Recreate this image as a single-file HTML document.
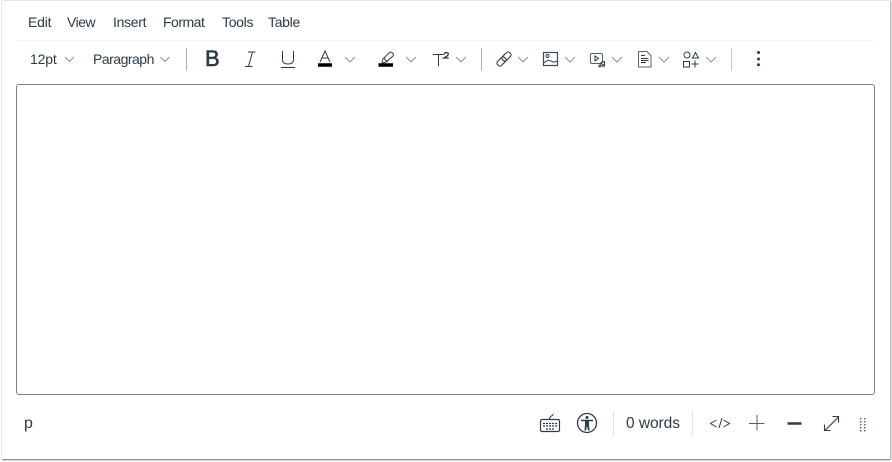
<!DOCTYPE html>
<html><head><meta charset="utf-8"><style>
html,body{margin:0;padding:0;background:#fff}
#p{position:relative;width:892px;height:462px;overflow:hidden;background:#fff;font-family:"Liberation Sans",sans-serif;color:#2d3b45}
.t{position:absolute;font-size:14px;line-height:18px;white-space:nowrap;color:#2d3b45}
svg{position:absolute;left:0;top:0}
</style></head><body><div id="p">
<div style="position:absolute;left:1px;top:0;width:890px;height:460px;box-sizing:border-box;border:1px solid #e6e6e6;border-right:1px solid #b8b8b8;border-bottom:1px solid #8f8f8f;border-radius:2px;box-shadow:1px 1px 1px #d4d4d4"></div>
<div style="position:absolute;left:16px;top:40px;width:860px;height:1px;background:#f3f3f3"></div>
<div style="position:absolute;left:16px;top:84px;width:859px;height:311px;box-sizing:border-box;border:1px solid #7f7f7f;border-radius:3px"></div>
<span class="t" style="left:28px;top:13px;letter-spacing:-.2px">Edit</span>
<span class="t" style="left:67px;top:13px;letter-spacing:-.5px">View</span>
<span class="t" style="left:113px;top:13px;letter-spacing:-.3px">Insert</span>
<span class="t" style="left:163px;top:13px;letter-spacing:-.5px">Format</span>
<span class="t" style="left:222px;top:13px;letter-spacing:-.3px">Tools</span>
<span class="t" style="left:268px;top:13px;letter-spacing:-.3px">Table</span>
<span class="t" style="left:30px;top:50px;letter-spacing:-.15px">12pt</span>
<span class="t" style="left:93px;top:50px;letter-spacing:-.5px">Paragraph</span>
<span class="t" style="left:626px;top:415px;font-size:15.5px;letter-spacing:-.05px">0 words</span>
<span class="t" style="left:24px;top:415px;font-size:16px">p</span>
<span class="t" style="left:205px;top:47px;font-size:22px;line-height:24px;font-weight:400;-webkit-text-stroke:.6px #2d3b45">B</span>
<svg width="892" height="462" fill="none" stroke="#2d3b45" stroke-width="1">
<!-- chevrons -->
<g stroke="#8a949c">
<path d="M65 57l4.500 4.500 4.500-4.500M160.500 57l4.500 4.500 4.500-4.500M345 57l5 5 5-5M406 57l5 5 5-5M456 57l5 5 5-5M518 57l5 5 5-5M565 57l5 5 5-5M612 57l5 5 5-5M659 57l5 5 5-5M706 57l5 5 5-5"/>
</g>
<!-- separators -->
<path d="M186.500 48v23M481.500 48v23" stroke="#a9b2b9"/>
<path d="M731.500 48v23" stroke="#c0c5ca"/>
<path d="M613.500 411v24M692.500 411v24" stroke="#e0e3e5"/>
<!-- I -->
<path d="M248 52h7.500M245 66.500h7.500M252.500 52l-4 14.500"/>
<!-- U -->
<path d="M282.500 51v8.500q0 4.500 5.500 4.500t5.500-4.500v-8.500M281 67.500h14"/>
<!-- A -->
<path d="M320 62l5-11 5 11M321.500 58h7"/>
<path d="M318 65h14" stroke="#000" stroke-width="3.500"/>
<!-- highlighter -->
<path d="M382 62l1-3 6.500-6.500q1.500-1 3 .5t.5 3l-7 6-3 1zM384 58.500l3.500 3.500"/>
<path d="M378.500 65h14.500" stroke="#000" stroke-width="3.500"/>
<!-- T2 -->
<path d="M433 54.500h10.500M438.500 54.500v12"/>
<path d="M444 54.500q.5-2 2.200-2t2.200 1.300q0 1.200-2 2.800l-2.300 1.400h4.600" stroke-width="1.300"/>
<!-- link -->
<g transform="rotate(-45 504 59)" stroke-width="1.100">
<rect x="495.500" y="56.250" width="10" height="5.500" rx="2.200"/>
<rect x="502.500" y="56.250" width="10" height="5.500" rx="2.200"/>
</g>
<!-- image -->
<rect x="543.500" y="52.500" width="14" height="13" stroke="#3d4b55" stroke-width="1.200"/>
<circle cx="547.500" cy="56" r="1.500"/>
<path d="M544 63q4-4 7-2t6 0"/>
<!-- media -->
<rect x="590.500" y="53.500" width="12" height="10" rx="1.500" stroke="#55626c"/>
<path d="M595 56v5l3.500-2.500z"/>
<path d="M601 66v-3.500l3.500-1v4" stroke-width="1"/>
<circle cx="599.800" cy="66" r="1"/><circle cx="603.500" cy="65.500" r="1"/>
<!-- doc -->
<path d="M638.500 51.500h8.500l4 4v11.500h-12.500z" stroke="#55626c"/>
<path d="M641 55.500h4M641 58.500h7.500M641 60.500h7.500M641 62.500h5" stroke-width=".9"/>
<!-- apps -->
<circle cx="687" cy="55" r="3"/>
<path d="M692.500 58h6l-3-5.500z"/>
<rect x="683.500" y="61.500" width="6" height="5.500"/>
<path d="M691.500 64h7M695 60.500v7"/>
<!-- dots -->
<g fill="#2d3b45" stroke="none"><circle cx="758.500" cy="52.500" r="1.500"/><circle cx="758.500" cy="59" r="1.500"/><circle cx="758.500" cy="64.800" r="1.500"/></g>
<!-- keyboard -->
<rect x="540.500" y="419.500" width="19" height="12" rx="1.500" stroke-width="1.200"/>
<path d="M549.500 419q.5-3 3-3.500l1-1.500"/>
<path d="M543 423.500h14M543 426h14M546 429h8" stroke-width="1.200" stroke-dasharray="2 1"/>
<!-- a11y -->
<circle cx="587" cy="423" r="9.500" stroke-width="1.300"/>
<circle cx="587" cy="417.500" r="1.500" fill="#2d3b45" stroke="none"/>
<path d="M581 420.500h12" stroke-width="1.500"/>
<path d="M585 420.500h4v4l.5 6h-1.500l-1-5-1 5h-1.500l.5-6z" fill="#2d3b45" stroke="none"/>
<!-- code -->
<path d="M716.500 420l-6 3.500 6 3.500M722 418l-3 10M723.500 420l6 3.500-6 3.500"/>
<!-- plus -->
<path d="M757 415v15.500M749 423.500h15.500" stroke="#55626c"/>
<!-- minus -->
<path d="M787.500 423.500h14" stroke-width="2.500"/>
<!-- expand -->
<path d="M825 430.500l13-13M832.500 416.500h6v6M824.500 424.500v6h6" stroke-width="1.100"/>
<!-- grip -->
<g fill="#5a6771" stroke="none">
<rect x="860" y="418" width="1.500" height="1.500"/><rect x="864" y="418" width="1.500" height="1.500"/>
<rect x="860" y="421" width="1.500" height="1.500"/><rect x="864" y="421" width="1.500" height="1.500"/>
<rect x="860" y="424" width="1.500" height="1.500"/><rect x="864" y="424" width="1.500" height="1.500"/>
<rect x="860" y="427" width="1.500" height="1.500"/><rect x="864" y="427" width="1.500" height="1.500"/>
<rect x="860" y="430" width="1.500" height="1.500"/><rect x="864" y="430" width="1.500" height="1.500"/>
</g>
</svg>
</div></body></html>
